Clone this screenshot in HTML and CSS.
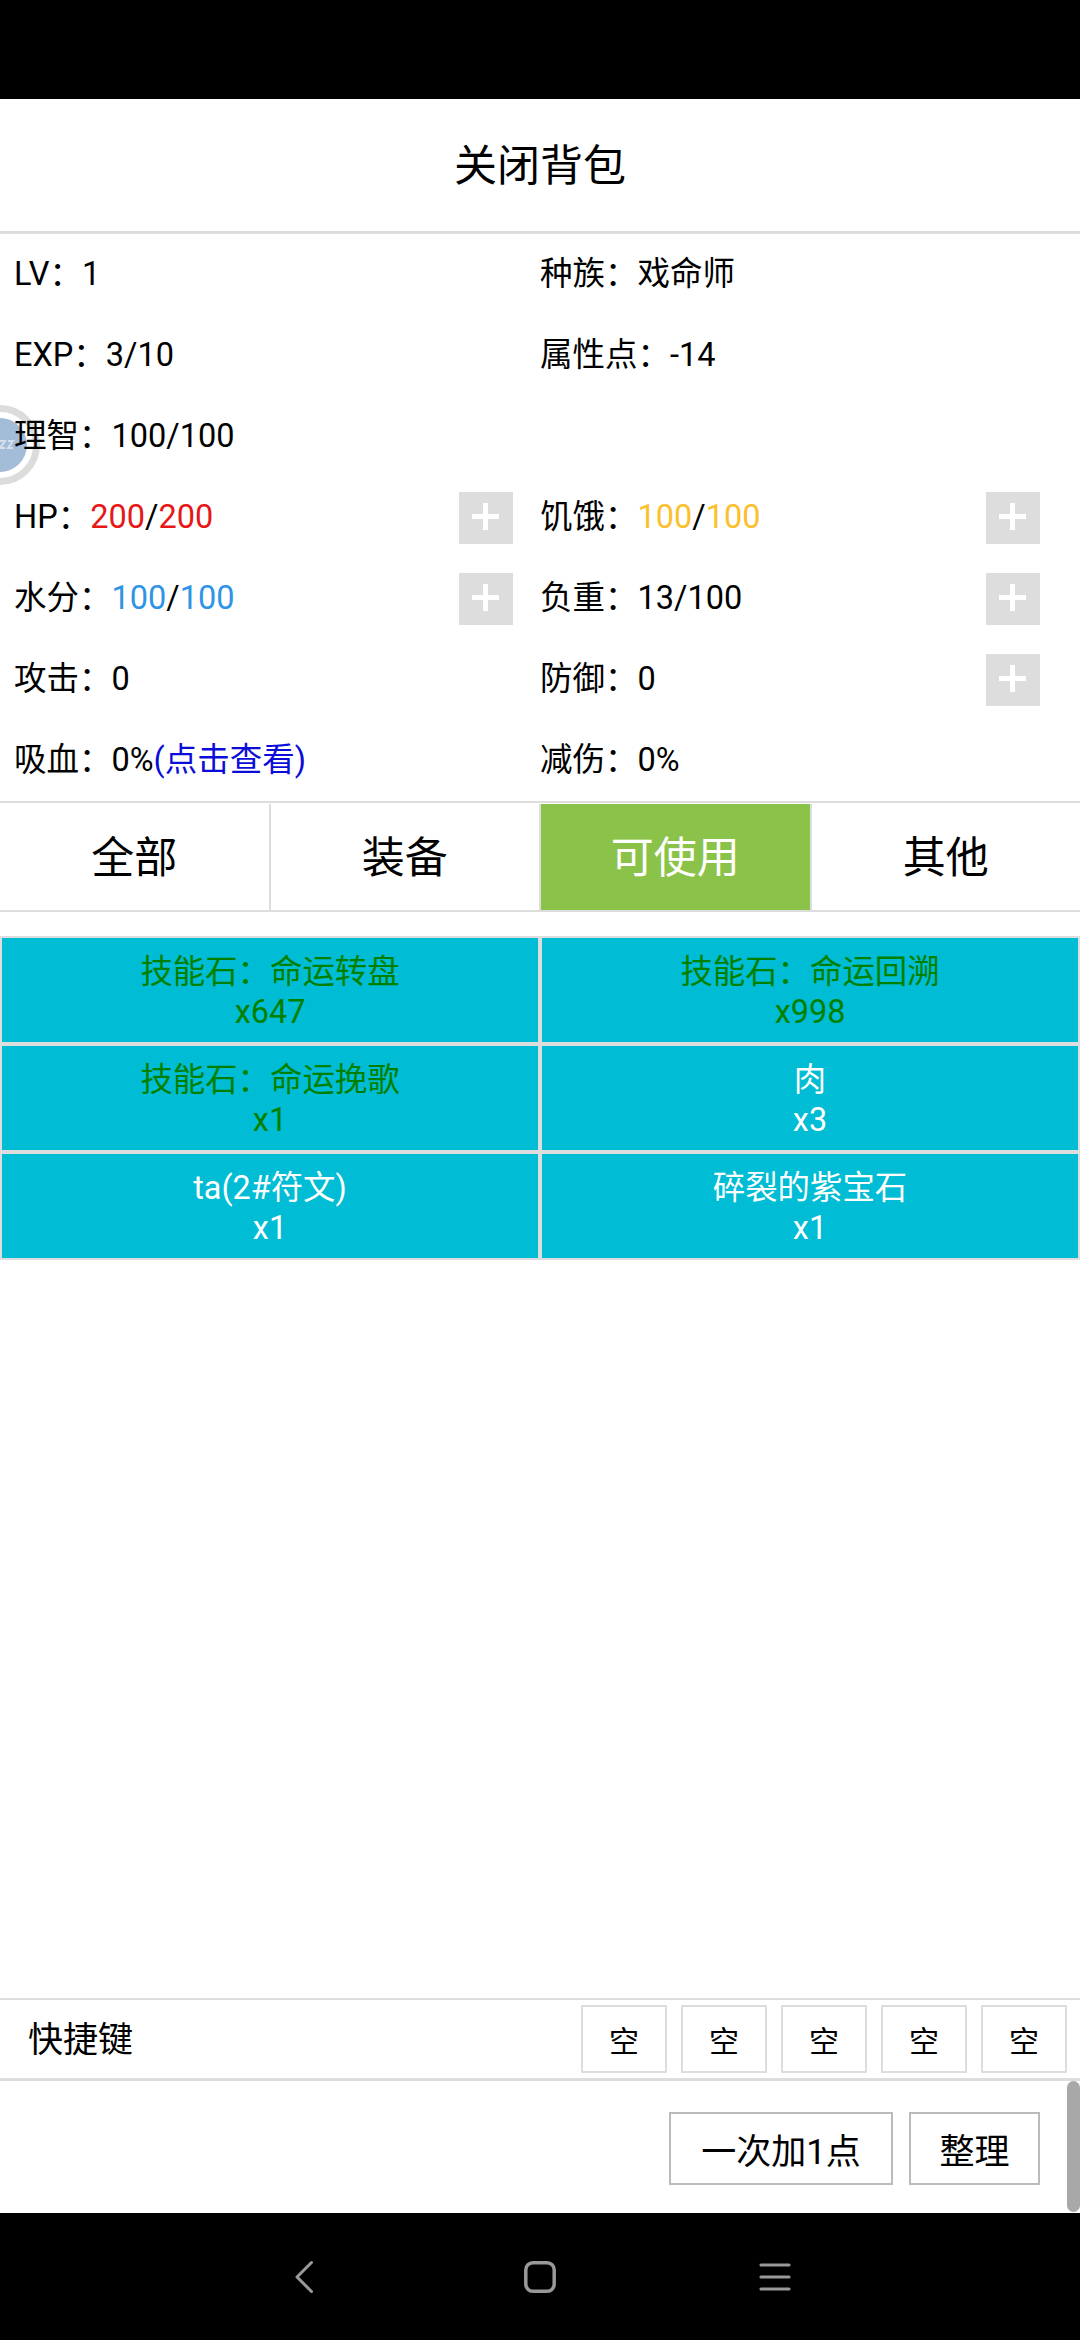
FILE: index.html
```html
<!DOCTYPE html>
<html lang="zh">
<head>
<meta charset="utf-8">
<title>背包</title>
<link rel="stylesheet" href="styles.css">
</head>
<body>
<div class="page">
  <div class="status"></div>
  <main class="main">
    <div class="title">关闭背包</div>
    <section class="stats">
      <div class="stat"><span>LV：1</span></div>
      <div class="stat"><span>种族：戏命师</span></div>
      <div class="stat"><span>EXP：3/10</span></div>
      <div class="stat"><span>属性点：-14</span></div>
      <div class="stat"><span>理智：100/100</span></div>
      <div class="stat"></div>
      <div class="stat"><span>HP：<i class="red">200</i>/<i class="red">200</i></span><b class="plus"></b></div>
      <div class="stat"><span>饥饿：<i class="amber">100</i>/<i class="amber">100</i></span><b class="plus"></b></div>
      <div class="stat"><span>水分：<i class="blue">100</i>/<i class="blue">100</i></span><b class="plus"></b></div>
      <div class="stat"><span>负重：13/100</span><b class="plus"></b></div>
      <div class="stat"><span>攻击：0</span></div>
      <div class="stat"><span>防御：0</span><b class="plus"></b></div>
      <div class="stat"><span>吸血：0%<i class="link">(点击查看)</i></span></div>
      <div class="stat"><span>减伤：0%</span></div>
    </section>
    <nav class="tabs">
      <div class="tab">全部</div>
      <div class="tab">装备</div>
      <div class="tab active">可使用</div>
      <div class="tab">其他</div>
    </nav>
    <section class="items">
      <div class="item green">技能石：命运转盘<br>x647</div>
      <div class="item green">技能石：命运回溯<br>x998</div>
      <div class="item green">技能石：命运挽歌<br>x1</div>
      <div class="item">肉<br>x3</div>
      <div class="item">ta(2#符文)<br>x1</div>
      <div class="item">碎裂的紫宝石<br>x1</div>
    </section>
    <section class="shortcuts">
      <div class="sc-label">快捷键</div>
      <div class="slots">
        <div class="slot">空</div><div class="slot">空</div><div class="slot">空</div><div class="slot">空</div><div class="slot">空</div>
      </div>
    </section>
    <section class="actions">
      <button class="btn wide">一次加1点</button>
      <button class="btn">整理</button>
    </section>
    <div class="scrollbar"></div>
  </main>
  <div class="navbar">
    <svg class="nav-icon" width="32" height="36" viewBox="0 0 32 36"><path d="M22.5 3.5 L8 18 L22.5 32.5" fill="none" stroke="#999" stroke-width="3" stroke-linecap="round" stroke-linejoin="round"/></svg>
    <svg class="nav-icon" width="32" height="36" viewBox="0 0 32 36"><rect x="1.8" y="3.8" width="28.4" height="28.4" rx="7" fill="none" stroke="#999" stroke-width="3.5"/></svg>
    <svg class="nav-icon" width="32" height="36" viewBox="0 0 32 36"><path d="M2 6H30M2 18H30M2 30H30" fill="none" stroke="#999" stroke-width="3.2" stroke-linecap="round"/></svg>
  </div>
  <svg class="ball" width="42" height="84" viewBox="0 0 42 84">
    <circle cx="0" cy="42" r="36.5" fill="none" stroke="#dcdcdc" stroke-width="7"/>
    <circle cx="0" cy="42" r="27" fill="#a3bcd8"/>
    <path d="M0 11A31 31 0 0 1 8 12M0 73A31 31 0 0 0 2 73" fill="none" stroke="#fff" stroke-width="3"/>
    <path d="M0 38h5l-5 7h5M8 38h5l-5 7h5" fill="none" stroke="#d5e0ec" stroke-width="2"/>
  </svg>
</div>
</body>
</html>
```
FILE: styles.css
```css
* { box-sizing: border-box; }
html, body { margin: 0; padding: 0; }
body { width: 1080px; height: 2340px; overflow: hidden; background: #000;
  font-family: Roboto, "Noto Sans CJK SC", sans-serif; color: #000; }
i { font-style: normal; }
.page { position: relative; width: 1080px; height: 2340px; display: flex; flex-direction: column; }
.status { height: 99px; background: #000; flex: none; }
.main { position: relative; flex: 1; background: #fff; display: flex; flex-direction: column; min-height: 0; }
.title { height: 135px; flex: none; display: flex; align-items: center; justify-content: center;
  font-size: 43px; padding-bottom: 6px; border-bottom: 3px solid #ddd; }
.stats { position: relative; z-index: 1; display: grid; grid-template-columns: 1fr 1fr; grid-auto-rows: 81px; height: 569px; flex: none;
  border-bottom: 2px solid #ddd; }
.stat { display: flex; align-items: center; justify-content: space-between; padding: 0 27px 0 14px; font-size: 32.5px; height: 81px; }
.stat span { margin-bottom: 8px; }
.stat:nth-child(even) { padding-left: 0; padding-right: 40px; }
.red { color: #e51717; }
.amber { color: #fbc02d; }
.blue { color: #2f93e6; }
.link { color: #0c0cd8; }
.plus { position: relative; width: 54px; height: 52px; background: #ddd; flex: none; }
.plus::before, .plus::after { content: ""; position: absolute; background: #fff; }
.plus::before { left: 13px; top: 22px; width: 27px; height: 5px; }
.plus::after { left: 24px; top: 11px; width: 5px; height: 27px; }
.tabs { display: flex; height: 109px; flex: none; padding-top: 1px; border-bottom: 2px solid #ddd; }
.tab { flex: 1; display: flex; align-items: center; justify-content: center; font-size: 43px; padding-bottom: 6px; border-left: 2px solid #ddd; }
.tab:first-child { border-left: 0; }
.tab.active { background: #8bc34a; color: #fff; }
.items { flex: 1; min-height: 0; padding: 24px 0 0 0; display: grid; grid-template-columns: 1fr 1fr; grid-auto-rows: 108px; align-content: start; }
.item { background: #00bcd4; border: 2px solid #ddd; color: #fff; font-size: 32.4px; line-height: 40px; text-align: center;
  padding-top: 14px; }
.item.green { color: #008000; }
.shortcuts { height: 83px; flex: none; display: flex; align-items: center; justify-content: space-between;
  border-top: 2px solid #ddd; border-bottom: 3px solid #ddd; padding: 0 13px 0 28px; }
.sc-label { font-size: 35px; padding-bottom: 6px; }
.slots { display: flex; gap: 14px; }
.slot { width: 86px; height: 68px; border: 2px solid #ddd; display: flex; align-items: center; justify-content: center; font-size: 30px; }
.actions { height: 132px; flex: none; display: flex; align-items: center; justify-content: flex-end; gap: 16px; padding: 2px 40px 0 0; }
.btn { height: 73px; width: 131px; background: #fff; border: 2px solid #bbb; font: inherit; font-size: 35px; padding: 0; color: #000; }
.btn.wide { width: 224px; }
.scrollbar { position: absolute; right: 0; bottom: 1px; width: 13px; height: 131px; background: #a8a8a8; border-radius: 7px; }
.navbar { height: 127px; flex: none; background: #000; display: flex; align-items: center; justify-content: center; gap: 203px; }
.nav-icon { flex: none; }
.ball { position: absolute; left: 0; top: 403px; z-index: 0; }
```
